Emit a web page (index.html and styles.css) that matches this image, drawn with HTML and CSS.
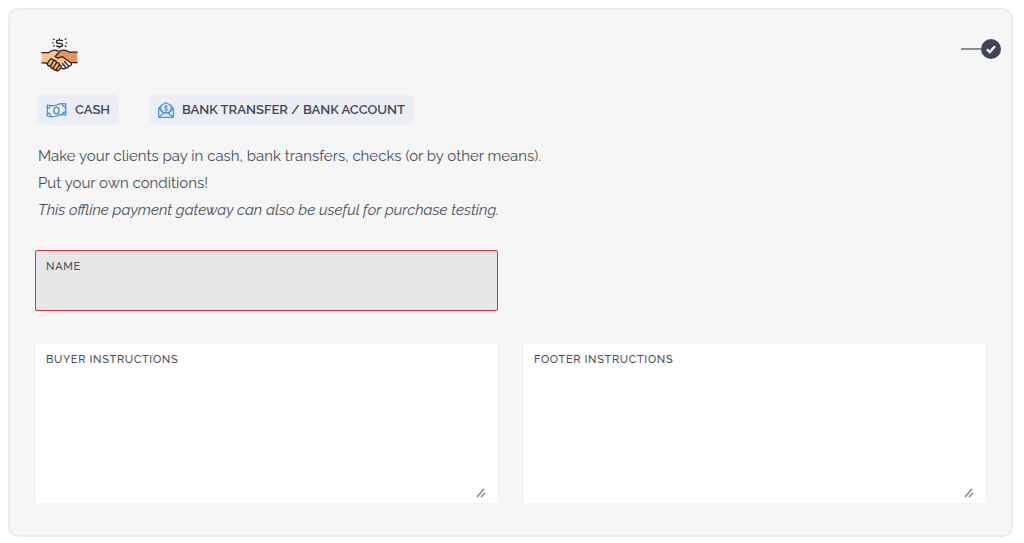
FILE: index.html
```html
<!DOCTYPE html>
<html lang="en">
<head>
<meta charset="utf-8">
<meta name="viewport" content="width=device-width, initial-scale=1">
<title>Offline payment gateway</title>
<link rel="stylesheet" href="styles.css">
</head>
<body>
<main class="card">
  <header class="card-header">
    <svg class="logo" viewBox="33 15 114 111" fill="none" stroke="#25211f" stroke-width="4" stroke-linejoin="round" stroke-linecap="round" aria-hidden="true">
      <path d="M34 66H56L68 59H84L112 66V96L98 109L80 122H70L50 101L34 98Z" fill="#f9c48c" stroke="none"/>
      <path d="M79 74L90 61Q103 54 119 65H143V97H126L105 86L94 79Q85 86 77 82Z" fill="#ea9257" stroke="none"/>
      <path d="M34 66H55L68 59Q77 57 84 62M34 98H46L52 102M143 65H120Q103 54 91 61L75 78Q82 87 94 79L99 80L124 98Q128 106 118 108M124 97H143"/>
      <path d="M52 98L60 87Q67 83 70 91Q78 88 79 97Q88 96 88 104Q96 105 93 113L87 120Q82 125 77 119Q71 121 69 114Q62 116 61 108Q49 109 52 98Z" fill="#f9b47c"/>
      <path d="M70 92L61 107M79 98L69 113M88 105L78 119M104 94L117 108Q113 116 106 112M98 100L108 112Q105 119 96 115"/>
      <path d="M99 31Q97 28 88 28Q79 28 79 33Q79 38 88 38Q98 38 98 43Q98 48 88 48Q80 48 78 45M88 23V28M88 48V53" stroke-linecap="butt"/>
      <path d="M70 25L72 26M67 36H69M71 46L72 45M106 25L108 24M109 36H111M106 46L108 47" stroke-width="4"/>
    </svg>
    <label class="toggle">
      <input class="toggle-input" type="checkbox" checked aria-label="Enable gateway">
      <span class="toggle-line"></span>
      <svg class="toggle-knob" viewBox="0 0 20 20" aria-hidden="true">
        <circle cx="10" cy="10" r="10" fill="#404554"/>
        <path d="M6 10.3L8.8 13L14 7.3" fill="none" stroke="#fff" stroke-width="2.4"/>
      </svg>
    </label>
  </header>

  <div class="badges">
    <span class="badge">
      <svg class="badge-icon" viewBox="0 0 20 16" fill="none" stroke="#4a90d9" stroke-width="1.3" stroke-linejoin="round" aria-hidden="true">
        <path d="M.8 3Q6 4.500 10 3Q15 1 19.200 2V13Q14 12 10 14Q5 15.500 .8 14Z"/>
        <ellipse cx="10" cy="8.500" rx="2.600" ry="3.300"/>
        <path d="M.8 6Q3.500 6.500 3.500 3.600M.8 11Q3.800 11 4 14.500M16 1.800Q16 5 19.200 5M16 12.600Q16 10 19.200 10"/>
      </svg>
      CASH
    </span>
    <span class="badge">
      <svg class="badge-icon badge-icon-mail" viewBox="0 0 16 16" fill="none" stroke="#4a90d9" stroke-width="1.2" stroke-linejoin="round" aria-hidden="true">
        <path d="M3 4L.7 6V15.300H15.300V6L13 4M.7 6L5.500 11.300M15.300 6L10.500 11.300M.7 15.300L6 10.800H10L15.300 15.300"/>
        <path d="M3 8.500V3.500L8 .7L13 3.500V8.500L10 11H6Z"/>
        <path d="M9.700 4.500Q6.300 3.500 6.300 5.200Q6.300 6 8 6.300Q9.800 6.600 9.700 7.600Q9.500 9 6.300 8.200M8 3V10" stroke-width="1"/>
      </svg>
      BANK TRANSFER / BANK ACCOUNT
    </span>
  </div>

  <p class="description">Make your clients pay in cash, bank transfers, checks (or by other means).<br>Put your own conditions!<br><em>This offline payment gateway can also be useful for purchase testing.</em></p>

  <form class="form">
    <div class="field field-invalid">
      <label class="field-label" for="name">NAME</label>
      <input class="field-input" id="name" type="text">
    </div>
    <div class="field field-tall field-start">
      <label class="field-label" for="buyer">BUYER INSTRUCTIONS</label>
      <textarea class="field-input field-area" id="buyer"></textarea>
      <svg class="grip" viewBox="0 0 10 10" stroke="#777" stroke-width="1.2" aria-hidden="true"><path d="M1 9L8 1M5 9L9 5"/></svg>
    </div>
    <div class="field field-tall">
      <label class="field-label" for="footer">FOOTER INSTRUCTIONS</label>
      <textarea class="field-input field-area" id="footer"></textarea>
      <svg class="grip" viewBox="0 0 10 10" stroke="#777" stroke-width="1.2" aria-hidden="true"><path d="M1 9L8 1M5 9L9 5"/></svg>
    </div>
  </form>
</main>
</body>
</html>
```
FILE: styles.css
```css
* {
  box-sizing: border-box;
}

body {
  margin: 0;
  padding: 8px 11px 6px 8px;
  background: #fff;
  color: #4b4e58;
  font-family: Raleway, Lato, sans-serif;
}

.card {
  padding: 26px;
  padding-bottom: 32px;
  border: 2px solid #ececec;
  border-radius: 10px;
  background: #f6f6f6;
}

.card-header {
  display: flex;
  justify-content: space-between;
  align-items: flex-start;
  padding-left: 5px;
}

.logo {
  width: 38px;
  height: 36px;
}

.toggle {
  display: flex;
  align-items: center;
  margin-top: 3px;
  margin-right: -16px;
}

.toggle-input {
  appearance: none;
  width: 0;
  height: 0;
  margin: 0;
}

.toggle-line {
  width: 20px;
  height: 2px;
  background: #8b8e95;
}

.toggle-knob {
  width: 20px;
  height: 20px;
}

.badges {
  display: flex;
  gap: 30px;
  margin-top: 22px;
  padding-left: 1px;
}

.badge {
  display: flex;
  align-items: center;
  gap: 8px;
  height: 31px;
  padding: 0 9px;
  border-radius: 7px;
  background: #ebeef5;
  color: #434755;
  font-size: 13px;
  font-weight: 600;
}

.badge-icon {
  width: 21px;
  height: 16px;
}

.badge-icon-mail {
  width: 16px;
}

.description {
  margin: 18px 0 26px;
  padding-left: 2px;
  font-size: 15px;
  line-height: 27px;
}

.form {
  display: grid;
  grid-template-columns: 1fr 1fr;
  gap: 33px 27px;
}

.field {
  position: relative;
  display: flex;
  flex-direction: column;
  background: #fff;
}

.field-invalid {
  height: 61px;
  margin: 0 -1px;
  border: 1px solid #d0343f;
  border-radius: 2px;
  background: #e6e7e9;
}

.field-tall {
  height: 159px;
}

.field-start {
  grid-column: 1;
}

.field-label {
  padding: 7px 10px 0;
  font-size: 11px;
  font-weight: 500;
  line-height: 17px;
  letter-spacing: 0.06em;
}

.field-input {
  flex: 1;
  min-height: 0;
  padding: 4px 10px;
  border: 0;
  outline: 0;
  background: transparent;
  color: inherit;
  font: inherit;
}

.field-area {
  resize: none;
}

.grip {
  position: absolute;
  right: 11px;
  bottom: 5px;
  width: 10px;
  height: 10px;
}
```
